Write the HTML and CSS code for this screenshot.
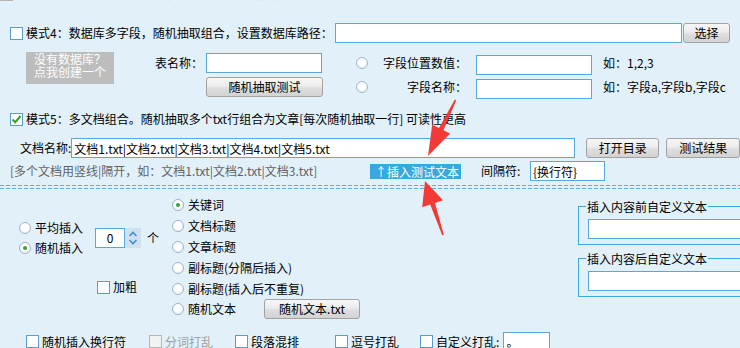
FILE: index.html
```html
<!DOCTYPE html>
<html lang="zh-CN">
<head>
	<meta charset="utf-8">
	<title>插入设置</title>
	<link rel="stylesheet" href="styles.css">
</head>
<body>
	<div class="row row-m3">
		<span class="cb off"></span>
		<span class="dim">模式3：单文档随机抽取多行，组合为文章段落内容</span>
	</div>

	<div class="row row-m4">
		<span class="cb"></span>
		<span class="m4-label">模式4：数据库多字段，随机抽取组合，设置数据库路径：</span>
		<input class="in in-path">
		<button class="btn btn-pick">选择</button>
	</div>

	<div class="m4-grid">
		<div class="dbbox">没有数据库？<br>点我创建一个</div>
		<span class="lbl-tbl">表名称：</span>
		<input class="in in-tbl">
		<button class="btn btn-test">随机抽取测试</button>
		<span class="rd r1"></span>
		<span class="lbl-r l1">字段位置数值：</span>
		<input class="in in-r i1">
		<span class="hint h1">如：1,2,3</span>
		<span class="rd r2"></span>
		<span class="lbl-r l2">字段名称：</span>
		<input class="in in-r i2">
		<span class="hint h2">如：字段a,字段b,字段c</span>
	</div>

	<div class="row row-m5">
		<span class="cb"><svg width="11" height="11" viewBox="0 0 11 11"><path d="M1.5 5.5 L4.2 8.3 L9.5 2" fill="none" stroke="#3a9a2a" stroke-width="2"/></svg></span>
		<span>模式5：多文档组合。随机抽取多个txt行组合为文章[每次随机抽取一行] 可读性更高</span>
	</div>

	<div class="row row-docs">
		<span class="doc-label">文档名称:</span>
		<input class="in in-docs" value="文档1.txt|文档2.txt|文档3.txt|文档4.txt|文档5.txt">
		<button class="btn btn-open">打开目录</button>
		<button class="btn btn-result">测试结果</button>
	</div>

	<div class="row row-hint">
		<span class="tip">[多个文档用竖线|隔开，如：文档1.txt|文档2.txt|文档3.txt]</span>
		<span class="mark">↑插入测试文本</span>
		<span class="sep-label">间隔符:</span>
		<input class="in in-sep" value="{换行符}">
	</div>

	<div class="divider"></div>

	<div class="lower">
		<div class="ins">
			<div class="ins-mode">
				<div class="rd-group">
					<label class="opt"><span class="rd"></span>平均插入</label>
					<label class="opt"><span class="rd on"></span>随机插入</label>
				</div>
				<div class="spin">
					<span class="spin-in">0</span>
					<svg class="spin-btn" width="16" height="20" viewBox="0 0 16 20">
						<rect width="16" height="20" fill="#cfe0ee"/>
						<path d="M4.5 8 L8 4.5 L11.5 8" fill="none" stroke="#3d8fd6" stroke-width="1.6"/>
						<path d="M4.5 12 L8 15.5 L11.5 12" fill="none" stroke="#3d8fd6" stroke-width="1.6"/>
					</svg>
				</div>
				<span class="unit">个</span>
			</div>
			<label class="opt bold-opt"><span class="cb"></span>加粗</label>
		</div>

		<div class="targets">
			<label class="opt t"><span class="rd on"></span>关键词</label>
			<label class="opt t"><span class="rd"></span>文档标题</label>
			<label class="opt t"><span class="rd"></span>文章标题</label>
			<label class="opt t"><span class="rd"></span>副标题(分隔后插入)</label>
			<label class="opt t"><span class="rd"></span>副标题(插入后不重复)</label>
			<div class="opt t"><span class="rd"></span>随机文本<button class="btn btn-rand">随机文本.txt</button></div>
		</div>

		<div class="groups">
			<fieldset class="grp">
				<legend>插入内容前自定义文本</legend>
				<input class="in in-grp">
			</fieldset>
			<fieldset class="grp grp2">
				<legend>插入内容后自定义文本</legend>
				<input class="in in-grp">
			</fieldset>
		</div>
	</div>

	<div class="row row-bottom">
		<label class="opt b1"><span class="cb"></span>随机插入换行符</label>
		<label class="opt b2 dim-opt"><span class="cb off"></span>分词打乱</label>
		<label class="opt b3"><span class="cb"></span>段落混排</label>
		<label class="opt b4"><span class="cb"></span>逗号打乱</label>
		<label class="opt b5"><span class="cb"></span>自定义打乱:</label>
		<input class="in in-custom" value="。">
	</div>

	<!-- 标注箭头 -->
	<svg class="arrows" width="740" height="348" viewBox="0 0 740 348">
		<polygon fill="#f23a36" points="454.8,99.6 439,128 432.2,124.7 428,156 450.2,133.5 443.4,130.2 456.2,100.4"/>
		<polygon fill="#f23a36" points="442.2,235.3 430.2,204.6 422.2,207.3 425,181 443,200.3 435,203 443.8,234.7"/>
	</svg>
</body>
</html>
```

FILE: styles.css
```css
* {
	box-sizing: border-box;
}

html,
body {
	margin: 0;
}

body {
	width: 740px;
	height: 348px;
	overflow: hidden;
	position: relative;
	background: #e2f1f9;
	font: 12px/14px "Noto Sans CJK SC", "Noto Sans", sans-serif;
	color: #000;
	white-space: nowrap;
}

.row {
	display: flex;
	align-items: center;
	height: 20px;
}

/* controls */
.cb {
	width: 13px;
	height: 13px;
	flex: none;
	margin-right: 3px;
	border: 1px solid #5b9bd0;
	background: #fff;
	display: inline-flex;
	align-items: center;
	justify-content: center;
}

.cb.off {
	border-color: #b5b5b5;
	background: #f2f2f2;
}

.rd {
	width: 12px;
	height: 12px;
	flex: none;
	margin-right: 4px;
	border-radius: 50%;
	border: 1px solid #9fb4c8;
	background: radial-gradient(circle at 50% 40%, #fff 45%, #e1e9f1);
	position: relative;
}

.rd.on::after {
	content: "";
	position: absolute;
	left: 3px;
	top: 3px;
	width: 4px;
	height: 4px;
	border-radius: 50%;
	background: #34a534;
}

.btn {
	height: 20px;
	flex: none;
	padding: 0;
	border: 1px solid #a2a2a2;
	border-radius: 3px;
	background: linear-gradient(#f7f7f7, #ececec 45%, #dedede 55%, #d3d3d3);
	font: inherit;
	color: #000;
	display: flex;
	align-items: center;
	justify-content: center;
}

.in {
	height: 20px;
	flex: none;
	margin: 0;
	padding: 0 2px;
	border: 1px solid #5aa7dc;
	background: #fff;
	font: inherit;
	color: #000;
	outline: none;
}

.opt {
	display: flex;
	align-items: center;
	height: 20px;
}

/* mode 3 (cut off) */
.row-m3 {
	margin-top: -16px;
}

.dim {
	color: #7a7a7a;
}

/* mode 4 */
.row-m4 {
	margin-top: 19px;
	padding-left: 10px;
}

.m4-label {
	width: 309px;
}

.in-path {
	width: 347px;
}

.btn-pick {
	width: 47px;
	margin-left: 1px;
}

.m4-grid {
	display: grid;
	grid-template-columns: 129px 51px 116px 34px 12px 108px 116px 1fr;
	grid-template-rows: 24px 24px;
	align-items: center;
	margin-top: 8px;
	padding-left: 26px;
}

.dbbox {
	grid-column: 1;
	grid-row: 1 / span 2;
	align-self: start;
	margin-top: 1px;
	width: 88px;
	height: 32px;
	background: #bdbdbd;
	color: #fff;
	text-align: center;
	line-height: 13px;
	overflow: hidden;
}

.lbl-tbl {
	grid-column: 2;
	grid-row: 1;
}

.in-tbl {
	grid-column: 3;
	grid-row: 1;
	width: 116px;
}

.btn-test {
	grid-column: 3;
	grid-row: 2;
	width: 117px;
}

.r1 { grid-column: 5; grid-row: 1; }
.r2 { grid-column: 5; grid-row: 2; }

.lbl-r {
	grid-column: 6;
	text-align: right;
	padding-right: 9px;
}

.l1 { grid-row: 1; }
.l2 { grid-row: 2; }

.in-r {
	grid-column: 7;
	width: 116px;
	align-self: end;
}

.i1 { grid-row: 1; }
.i2 { grid-row: 2; }

.hint {
	grid-column: 8;
	padding-left: 11px;
}

.h1 { grid-row: 1; }
.h2 { grid-row: 2; }

/* mode 5 */
.row-m5 {
	margin-top: 10px;
	padding-left: 10px;
}

.row-docs {
	margin-top: 9px;
	padding-left: 20px;
}

.doc-label {
	width: 56px;
}

.in-docs {
	width: 504px;
}

.btn-open {
	width: 73px;
	margin-left: 11px;
}

.btn-result {
	width: 74px;
	margin-left: 7px;
}

.row-hint {
	margin-top: 3px;
	padding-left: 10px;
}

.tip {
	width: 360px;
	color: #626262;
}

.mark {
	width: 91px;
	height: 15px;
	line-height: 15px;
	background: #3aa8e0;
	color: #fff;
	padding-left: 5px;
}

.sep-label {
	width: 49px;
	margin-left: 20px;
}

.in-sep {
	width: 75px;
}

.divider {
	height: 4px;
	margin-top: 4px;
	background-image:
		repeating-linear-gradient(90deg, #53b3e6 0 4px, transparent 4px 6px),
		repeating-linear-gradient(90deg, #53b3e6 0 4px, transparent 4px 6px);
	background-size: 100% 1px;
	background-repeat: no-repeat;
	background-position: 0 0, 0 3px;
}

/* lower block */
.lower {
	display: grid;
	grid-template-columns: 172px 406px 200px;
	align-items: start;
}

.ins-mode {
	display: flex;
	align-items: center;
	padding-top: 29px;
	padding-left: 19px;
}

.rd-group {
	display: flex;
	flex-direction: column;
}

.spin {
	display: flex;
	margin-left: 12px;
}

.spin-in {
	width: 30px;
	height: 20px;
	border: 1px solid #5aa7dc;
	background: #fff;
	display: flex;
	align-items: center;
	justify-content: center;
}

.spin-btn {
	display: block;
}

.unit {
	margin-left: 6px;
}

.bold-opt {
	margin-top: 19px;
	margin-left: 97px;
}

.targets {
	padding-top: 6px;
}

.opt.t {
	height: 20.8px;
}

.btn-rand {
	width: 96px;
	margin-left: 28px;
}

.groups {
	padding-top: 11px;
}

.grp {
	margin: 0;
	width: 200px;
	padding: 6px 0 5px 9px;
	border: 1px solid #3ba9e0;
	border-right: none;
}

.grp legend {
	padding: 0 1px;
	margin-left: -2px;
	line-height: 13px;
}

.grp2 {
	margin-top: 7px;
}

.in-grp {
	width: 160px;
	display: block;
}

/* bottom options */
.row-bottom {
	margin-top: 12px;
	padding-left: 26px;
}

.b2 { margin-left: 23px; }
.b3 { margin-left: 22px; }
.b4 { margin-left: 36px; }
.b5 { margin-left: 21px; }

.dim-opt {
	color: #a0a0a0;
}

.in-custom {
	width: 47px;
	margin-left: 4px;
}

.arrows {
	position: absolute;
	left: 0;
	top: 0;
	pointer-events: none;
}
```
